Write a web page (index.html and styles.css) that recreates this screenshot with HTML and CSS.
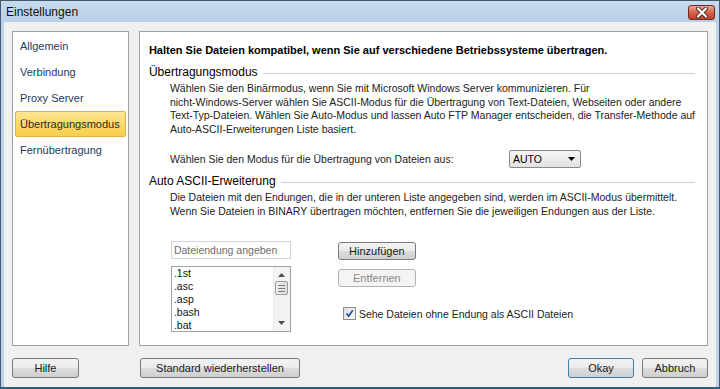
FILE: index.html
```html
<!doctype html>
<html lang="de">

<head>
	<meta charset="UTF-8">
	<title>Einstellungen</title>
	<link rel="stylesheet" href="styles.css">
</head>

<body>
	<div class="window">
		<div class="titlebar">
			<span class="title">Einstellungen</span>
			<span class="close">
				<svg width="14" height="11" viewBox="0 0 14 11">
					<path d="M3 1.5 L11 9.5 M11 1.5 L3 9.5" stroke="#5a2418" stroke-width="4" stroke-linecap="round" />
					<path d="M3 1.5 L11 9.5 M11 1.5 L3 9.5" stroke="#fff" stroke-width="2.2" stroke-linecap="round" />
				</svg>
			</span>
		</div>

		<div class="client">
			<div class="main">
				<ul class="nav">
					<li>Allgemein</li>
					<li>Verbindung</li>
					<li>Proxy Server</li>
					<li class="active">Übertragungsmodus</li>
					<li>Fernübertragung</li>
				</ul>

				<div class="panel">
					<h1>Halten Sie Dateien kompatibel, wenn Sie auf verschiedene Betriebssysteme übertragen.</h1>

					<div class="group"><span>Übertragungsmodus</span></div>
					<p class="text">
						Wählen Sie den Binärmodus, wenn Sie mit Microsoft Windows Server kommunizieren. Für<br>
						nicht-Windows-Server wählen Sie ASCII-Modus für die Übertragung von Text-Dateien, Webseiten oder andere<br>
						Text-Typ-Dateien. Wählen Sie Auto-Modus und lassen Auto FTP Manager entscheiden, die Transfer-Methode auf<br>
						Auto-ASCII-Erweiterungen Liste basiert.
					</p>

					<div class="mode-row">
						<span class="mode-label">Wählen Sie den Modus für die Übertragung von Dateien aus:</span>
						<div class="select">
							<span>AUTO</span>
							<svg width="7" height="4" viewBox="0 0 7 4"><path d="M0 0 H7 L3.5 4 Z" fill="#000" /></svg>
						</div>
					</div>

					<div class="group group-2"><span>Auto ASCII-Erweiterung</span></div>
					<p class="text">
						Die Dateien mit den Endungen, die in der unteren Liste angegeben sind, werden im ASCII-Modus übermittelt.<br>
						Wenn Sie Dateien in BINARY übertragen möchten, entfernen Sie die jeweiligen Endungen aus der Liste.
					</p>

					<div class="ext">
						<div class="ext-left">
							<div class="input">Dateiendung angeben</div>
							<div class="listbox">
								<ul class="items">
									<li>.1st</li>
									<li>.asc</li>
									<li>.asp</li>
									<li>.bash</li>
									<li>.bat</li>
								</ul>
								<div class="scrollbar">
									<svg class="arrow" width="7" height="4" viewBox="0 0 7 4"><path d="M0 4 H7 L3.5 0 Z" fill="#4d4d4d" /></svg>
									<div class="thumb"><i></i><i></i><i></i></div>
									<svg class="arrow down" width="7" height="4" viewBox="0 0 7 4"><path d="M0 0 H7 L3.5 4 Z" fill="#4d4d4d" /></svg>
								</div>
							</div>
						</div>

						<div class="ext-right">
							<button class="btn btn-small">Hinzufügen</button>
							<button class="btn btn-small" disabled>Entfernen</button>
							<label class="check">
								<span class="box">
									<svg width="9" height="9" viewBox="0 0 9 9"><path d="M1.5 4.5 L3.6 7 L7.8 1.2" stroke="#2a4fa8" stroke-width="1.7" fill="none" /></svg>
								</span>
								Sehe Dateien ohne Endung als ASCII Dateien
							</label>
						</div>
					</div>
				</div>
			</div>

			<div class="footer">
				<button class="btn btn-help">Hilfe</button>
				<button class="btn btn-reset">Standard wiederherstellen</button>
				<span class="spacer"></span>
				<button class="btn btn-footer btn-default">Okay</button>
				<button class="btn btn-footer">Abbruch</button>
			</div>
		</div>
	</div>
</body>

</html>
```

FILE: styles.css
```css
* {
	box-sizing: border-box;
}

body {
	margin: 0;
	font: 10.5px "Liberation Sans", Arial, sans-serif;
	color: #1a1a1a;
	background: #f0f0f0;
}

.window {
	width: 720px;
	height: 389px;
	border: 1px solid #44586e;
	border-bottom: 2px solid #2b6179;
	background: #bcd2ea;
	display: flex;
	flex-direction: column;
}

.titlebar {
	height: 21px;
	display: flex;
	align-items: center;
	justify-content: space-between;
	padding: 0 4px 0 5px;
	background: linear-gradient(#c8dbef, #b7cfe9);
}

.title {
	font-size: 12px;
	color: #111;
}

.close {
	width: 27px;
	height: 15px;
	margin-top: 1px;
	border: 1px solid #6e2b1e;
	border-radius: 3px;
	background: linear-gradient(#e9a592, #d2654c 50%, #c0402a);
	display: flex;
	align-items: center;
	justify-content: center;
}

.client {
	flex: 1;
	margin: 0 3px 0 3px;
	padding: 9px 8px 0 8px;
	background: #f0f0f0;
	display: flex;
	flex-direction: column;
}

.main {
	height: 315px;
	display: flex;
	gap: 10px;
}

.nav {
	width: 120px;
	margin: 0;
	padding: 1px 1px;
	list-style: none;
	background: #fff;
	border: 1px solid #9ea2a8;
	font-size: 11px;
}

.nav li {
	height: 26px;
	line-height: 26px;
	margin: 0 1px;
	padding-left: 5px;
	color: #1d3a60;
}

.nav li.active {
	border: 1px solid #e0b24a;
	border-radius: 2px;
	line-height: 24px;
	padding-left: 4px;
	background: linear-gradient(#fde795, #fbd968 50%, #f8ce4e);
	color: #2a2a2a;
}

.panel {
	flex: 1;
	padding: 10px 12px 0 9px;
	background: #fff;
	border: 1px solid #9ea2a8;
	white-space: nowrap;
}

h1 {
	margin: 0;
	font-size: 11px;
	line-height: 16px;
	font-weight: bold;
	color: #000;
}

.group {
	display: flex;
	align-items: center;
	gap: 5px;
	margin-top: 6px;
	font-size: 12px;
	line-height: 16px;
	color: #000;
}

.group::after {
	content: "";
	flex: 1;
	height: 1px;
	margin-top: 2px;
	background: #cfcfcf;
}

.group-2 {
	margin-top: 5px;
}

.text {
	margin: 2px 0 0 21px;
	line-height: 13.5px;
	color: #222;
}

.mode-row {
	display: flex;
	align-items: center;
	margin: 14px 0 0 21px;
	color: #222;
}

.mode-label {
	width: 339px;
}

.select {
	width: 72px;
	height: 18px;
	display: flex;
	align-items: center;
	justify-content: space-between;
	padding: 0 5px 0 3px;
	border: 1px solid #8a8a8a;
	border-radius: 2px;
	background: linear-gradient(#f6f6f6, #e2e2e2);
	color: #000;
}

.ext {
	display: flex;
	margin: 23px 0 0 22px;
}

.ext-left {
	width: 120px;
}

.input {
	height: 18px;
	line-height: 16px;
	padding-left: 2px;
	border: 1px solid #d4d4d4;
	color: #6e6e6e;
}

.listbox {
	height: 66px;
	margin-top: 7px;
	display: flex;
	border: 1px solid #a2a2a2;
}

.items {
	flex: 1;
	margin: 0;
	padding: 0 0 0 2px;
	list-style: none;
	color: #111;
}

.items li {
	line-height: 13px;
}

.scrollbar {
	width: 17px;
	display: flex;
	flex-direction: column;
	align-items: center;
	background: #f3f3f3;
	border-left: 1px solid #ececec;
}

.arrow {
	margin-top: 6px;
}

.arrow.down {
	margin-top: auto;
	margin-bottom: 6px;
}

.thumb {
	width: 13px;
	height: 14px;
	margin-top: 4px;
	border: 1px solid #9a9a9a;
	border-radius: 2px;
	background: linear-gradient(90deg, #f1f1f1, #dedede);
	display: flex;
	flex-direction: column;
	align-items: center;
	justify-content: center;
	gap: 2px;
}

.thumb i {
	width: 7px;
	height: 1px;
	background: #777;
}

.ext-right {
	margin-left: 47px;
	padding-top: 1px;
	display: flex;
	flex-direction: column;
	align-items: flex-start;
}

.btn {
	height: 20px;
	padding: 0;
	font: 11px "Liberation Sans", Arial, sans-serif;
	color: #1a1a1a;
	border: 1px solid #7a7a7a;
	border-radius: 3px;
	background: linear-gradient(#f3f3f3, #ebebeb 50%, #dddddd 51%, #cfcfcf);
}

.btn-small {
	width: 78px;
	height: 18px;
	margin-bottom: 9px;
}

.btn[disabled] {
	color: #8a8a8a;
	border-color: #b3b3b3;
	background: #f4f4f4;
}

.check {
	display: flex;
	align-items: center;
	gap: 3px;
	margin-top: 11px;
	margin-left: 5px;
	color: #222;
}

.box {
	width: 13px;
	height: 13px;
	display: flex;
	align-items: center;
	justify-content: center;
	border: 1px solid #8e8f8f;
	background: linear-gradient(135deg, #dcdcdc, #fbfbfb);
}

.footer {
	display: flex;
	margin-top: 12px;
}

.btn-help {
	width: 67px;
}

.btn-reset {
	width: 160px;
	margin-left: 61px;
}

.spacer {
	flex: 1;
}

.btn-footer {
	width: 66px;
	margin-left: 8px;
}

.btn-default {
	border-color: #3c7fb1;
}
```
